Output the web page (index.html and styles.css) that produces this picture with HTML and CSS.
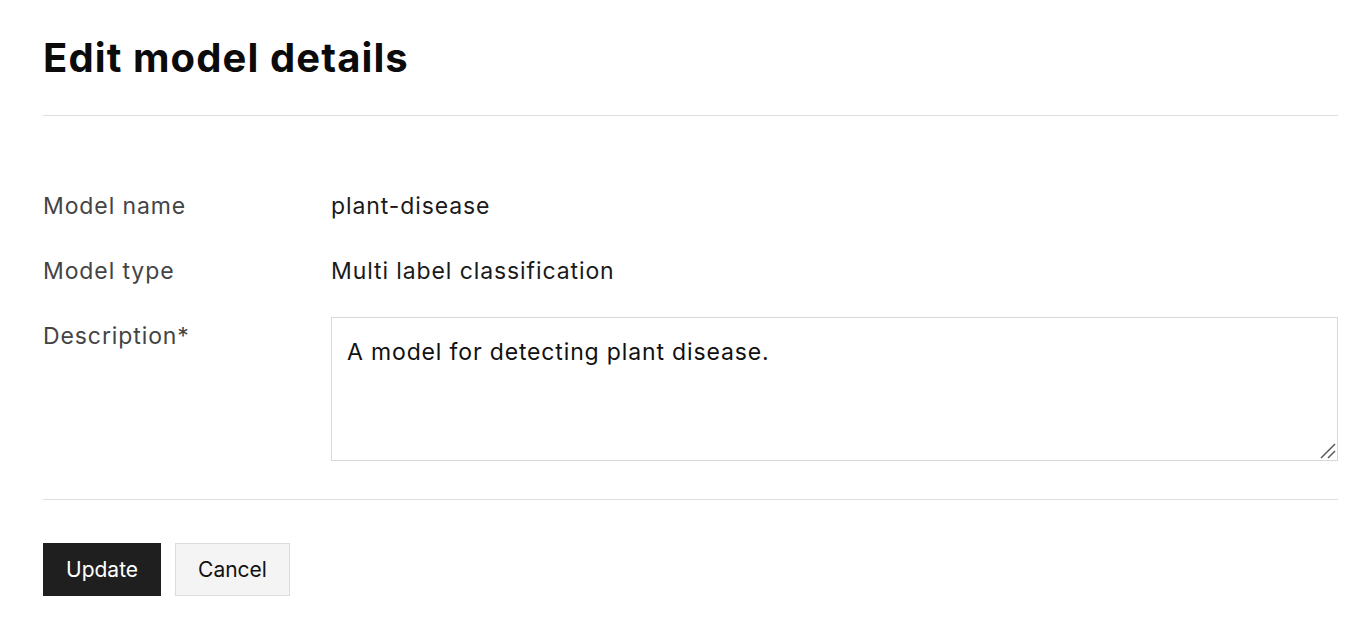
FILE: index.html
```html
<!DOCTYPE html>
<html>
<head>
<meta charset="utf-8">
<link rel="stylesheet" href="styles.css">
</head>
<body>
<main class="page">
  <h1 class="title">Edit model details</h1>
  <hr class="rule">
  <form class="form">
    <div class="row">
      <div class="label">Model name</div>
      <div class="value">plant-disease</div>
    </div>
    <div class="row">
      <div class="label">Model type</div>
      <div class="value">Multi label classification</div>
    </div>
    <div class="row row-desc">
      <label class="label" for="desc">Description*</label>
      <div class="textarea-wrap">
        <textarea id="desc" class="textarea">A model for detecting plant disease.</textarea>
        <svg class="grip" width="18" height="18" viewBox="0 0 18 18" aria-hidden="true">
          <line x1="2" y1="16" x2="16" y2="2" stroke="#555" stroke-width="1.4"/>
          <line x1="9" y1="16" x2="16" y2="9" stroke="#555" stroke-width="1.4"/>
        </svg>
      </div>
    </div>
  </form>
  <hr class="rule rule-bottom">
  <div class="actions">
    <button class="btn btn-primary" type="button">Update</button>
    <button class="btn btn-secondary" type="button">Cancel</button>
  </div>
</main>
</body>
</html>
```

FILE: styles.css
```css
* { box-sizing: border-box; }
html, body { margin: 0; background: #fff; }
body {
  font-family: Inter, Roboto, "Liberation Sans", sans-serif;
  color: #1a1a1a;
}
.page {
  padding: 30px 22px 0 43px;
}
.title {
  margin: 0;
  font-size: 40px;
  font-weight: 700;
  line-height: 56px;
  color: #0b0b0b;
  letter-spacing: 1.1px;
}
.rule {
  border: 0;
  border-top: 1px solid #dedede;
  margin: 29px 0 0 0;
}
.form {
  padding-top: 75px;
  display: flex;
  flex-direction: column;
  gap: 35px;
}
.row {
  display: grid;
  grid-template-columns: 288px 1fr;
  align-items: start;
  font-size: 23px;
  line-height: 30px;
  letter-spacing: 0.9px;
}
.label {
  color: #444;
}
.value {
  color: #1a1a1a;
}
.textarea-wrap {
  position: relative;
  margin-top: -4px;
}
.textarea {
  display: block;
  width: 100%;
  height: 144px;
  border: 1px solid #d8d8d8;
  padding: 19px 15px;
  font-family: inherit;
  font-size: 23px;
  line-height: 30px;
  letter-spacing: 0.85px;
  color: #111;
  resize: none;
  border-radius: 0;
  outline: none;
}
.grip {
  position: absolute;
  right: 1px;
  bottom: 1px;
  pointer-events: none;
}
.rule-bottom {
  margin-top: 38px;
}
.actions {
  display: flex;
  gap: 14px;
  padding-top: 43px;
}
.btn {
  height: 53px;
  font-family: inherit;
  font-size: 21px;
  padding: 0 22px;
  border-radius: 0;
  cursor: pointer;
}
.btn-primary {
  background: #1f1f1f;
  color: #fff;
  border: 1px solid #1f1f1f;
}
.btn-secondary {
  background: #f4f4f4;
  color: #111;
  border: 1px solid #dcdcdc;
}
```
